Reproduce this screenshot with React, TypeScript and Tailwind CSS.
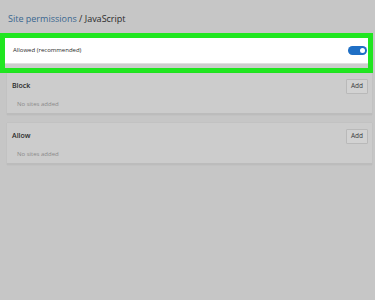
import React from 'react';

function Toggle() {
  return (
    <div className="w-[19px] h-[9px] rounded-full bg-[#1f6fc5] flex items-center justify-end pr-[2px]">
      <div className="w-[5px] h-[5px] rounded-full bg-white" />
    </div>
  );
}

function SiteList({ title }: { title: string }) {
  return (
    <section className="ml-[7px] mr-[3px] bg-[#cccccc] border-b-2 border-[#bcbcbc] shadow-[0_0_1px_rgba(0,0,0,0.12)]">
      <div className="flex items-center justify-between h-[22px] pl-[5px] pr-[4px] pt-[4px]">
        <span className="text-[7px] font-semibold text-[#2a2a2a]">{title}</span>
        <button className="h-[15px] px-[4px] text-[6.5px] text-[#3a3a3a] bg-[#d2d2d2] border border-[#b9b9b9] rounded-[1px]">
          Add
        </button>
      </div>
      <div className="h-[18px] pl-[10px] pt-[5px] text-[6px] text-[#8a8a8a]">No sites added</div>
    </section>
  );
}

export default function App() {
  return (
    <div className="w-[375px] h-[300px] bg-[#c6c6c6] overflow-hidden" style={{ fontFamily: '"Open Sans", "Noto Sans", sans-serif' }}>
      <h1 className="h-[33px] pl-[8px] pt-[13px] text-[9px] leading-[12px] text-[#2b2b2b]">
        <span className="text-[#3a6690]">Site permissions</span> / JavaScript
      </h1>

      <div className="mr-[2px] border-[5px] border-[#20e620] bg-[#cdcdcd]">
        <div className="flex items-center justify-between h-[26px] bg-white pl-[8px] pr-[1px] border-b border-[#e0e0e0]">
          <span className="text-[6px] text-[#2a2a2a]">Allowed (recommended)</span>
          <Toggle />
        </div>
        <div className="h-[4px]" />
      </div>

      <SiteList title="Block" />
      <div className="h-[8px]" />
      <SiteList title="Allow" />
    </div>
  );
}
